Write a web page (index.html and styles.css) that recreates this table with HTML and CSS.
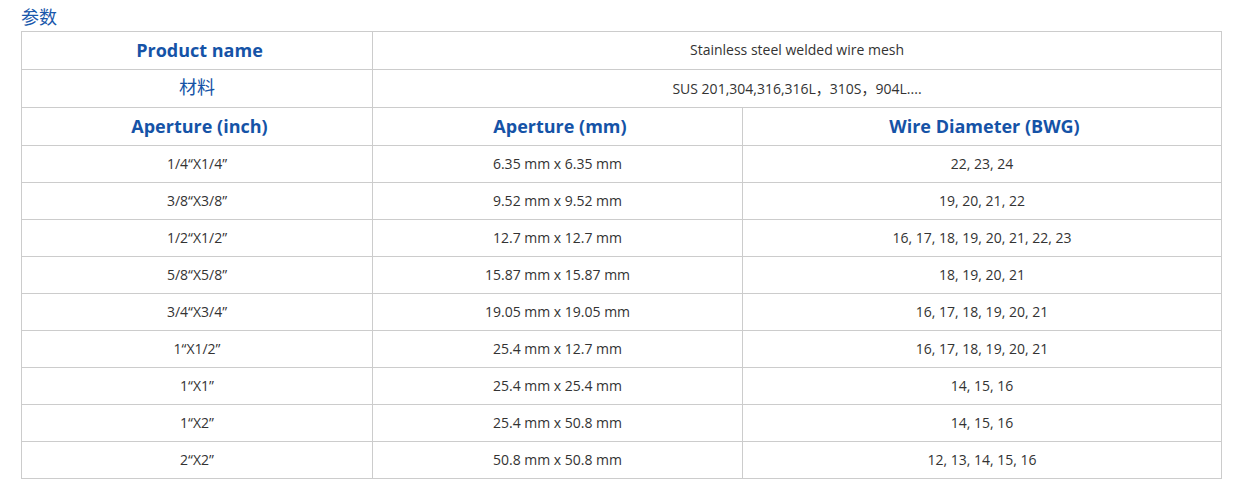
FILE: index.html
```html
<!DOCTYPE html>
<html lang="zh">
<head>
<meta charset="utf-8">
<link rel="stylesheet" href="styles.css">
</head>
<body>
<div class="wrap">
  <div class="title">参数</div>
  <table class="spec">
    <colgroup>
      <col class="c1"><col class="c2"><col class="c3">
    </colgroup>
    <tr class="hrow">
      <th>Product name</th>
      <td colspan="2">Stainless steel welded wire mesh</td>
    </tr>
    <tr class="hrow">
      <th class="cjk">材料</th>
      <td colspan="2">SUS 201,304,316,316L，310S，904L....</td>
    </tr>
    <tr class="hrow">
      <th>Aperture (inch)</th>
      <th>Aperture (mm)</th>
      <th>Wire Diameter (BWG)</th>
    </tr>
    <tr><td>1/4“X1/4”</td><td>6.35 mm x 6.35 mm</td><td>22, 23, 24</td></tr>
    <tr><td>3/8“X3/8”</td><td>9.52 mm x 9.52 mm</td><td>19, 20, 21, 22</td></tr>
    <tr><td>1/2“X1/2”</td><td>12.7 mm x 12.7 mm</td><td>16, 17, 18, 19, 20, 21, 22, 23</td></tr>
    <tr><td>5/8“X5/8”</td><td>15.87 mm x 15.87 mm</td><td>18, 19, 20, 21</td></tr>
    <tr><td>3/4“X3/4”</td><td>19.05 mm x 19.05 mm</td><td>16, 17, 18, 19, 20, 21</td></tr>
    <tr><td>1“X1/2”</td><td>25.4 mm x 12.7 mm</td><td>16, 17, 18, 19, 20, 21</td></tr>
    <tr><td>1“X1”</td><td>25.4 mm x 25.4 mm</td><td>14, 15, 16</td></tr>
    <tr><td>1“X2”</td><td>25.4 mm x 50.8 mm</td><td>14, 15, 16</td></tr>
    <tr><td>2“X2”</td><td>50.8 mm x 50.8 mm</td><td>12, 13, 14, 15, 16</td></tr>
  </table>
</div>
</body>
</html>
```
FILE: styles.css
```css
html, body {
  margin: 0;
  padding: 0;
  background: #fff;
}
.wrap {
  padding: 0 21px;
  font-family: "Open Sans", "Noto Sans CJK SC", sans-serif;
}
.title {
  font-family: "Noto Sans CJK SC", "Open Sans", sans-serif;
  font-size: 18px;
  line-height: 24px;
  padding-top: 4px;
  height: 27px;
  color: #1a58ab;
}
.spec {
  width: 1200px;
  border-collapse: collapse;
  table-layout: fixed;
}
.c1 { width: 351px; }
.c2 { width: 370px; }
.c3 { width: 479px; }
.spec tr { height: 37px; }
.spec tr.hrow { height: 38px; }
.spec th, .spec td {
  border: 1px solid #cccccc;
  padding: 0 0 2px 0;
  text-align: center;
  vertical-align: middle;
}
.spec td {
  font-size: 14px;
  color: #333333;
}
.spec th {
  font-size: 18px;
  font-weight: 700;
  color: #1553a7;
  padding-left: 5px;
}
.spec th.cjk {
  font-family: "Noto Sans CJK SC", sans-serif;
  font-weight: 400;
  padding-left: 0;
  padding-bottom: 6px;
}
```
